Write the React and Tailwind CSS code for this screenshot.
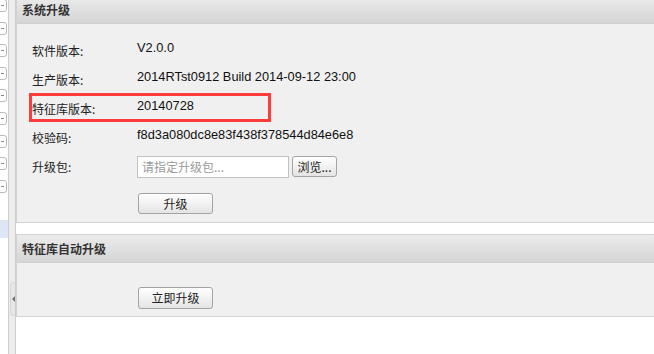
import React from "react";

const ROWS = [
  { label: "软件版本:", value: "V2.0.0" },
  { label: "生产版本:", value: "2014RTst0912 Build 2014-09-12 23:00" },
  { label: "特征库版本:", value: "20140728" },
  { label: "校验码:", value: "f8d3a080dc8e83f438f378544d84e6e8" },
];

const cjk = "font-['Noto_Sans_CJK_SC',sans-serif]";
const latin = "font-['Liberation_Sans','Noto_Sans_CJK_SC',sans-serif]";

function Btn({ children, className = "" }) {
  return (
    <button
      className={`flex items-center justify-center rounded-[3px] border border-[#a3a3a3] bg-gradient-to-b from-white to-[#e4e4e4] text-[12px] leading-none text-[#222] ${cjk} ${className}`}
    >
      {children}
    </button>
  );
}

function Header({ title }) {
  return (
    <div className="flex h-[28px] items-center border-b border-[#cfcfcf] bg-gradient-to-b from-[#ececec] to-[#d5d5d5] pl-[5px]">
      <span className={`text-[12px] font-bold text-[#333] ${cjk}`}>{title}</span>
    </div>
  );
}

export default function App() {
  return (
    <div className="relative flex h-[354px] w-[654px] overflow-hidden bg-white">
      {/* 左侧被截断的树 */}
      <div className="flex w-[8px] shrink-0 flex-col overflow-hidden">
        <div className="flex flex-col gap-[9.6px] pt-0 -mt-[1px]">
          {Array.from({ length: 9 }).map((_, i) => (
            <div
              key={i}
              className="-ml-[10px] flex h-[13px] w-[17px] shrink-0 items-center rounded-[3px] border border-[#b9b9b9] bg-white pl-[10px]"
            >
              <span className="h-[1px] w-[3px] bg-[#888]" />
            </div>
          ))}
        </div>
        <div className="mt-[27px] h-[18px] w-full shrink-0 bg-[#dde6f4]" />
      </div>

      {/* 分隔条 */}
      <div className="flex w-[8px] shrink-0 flex-col border-x border-[#cdcdcd] bg-[#ededed]">
        <div className="mt-[282px] ml-[1px] flex h-[34px] w-[5px] items-center rounded-l-[4px] border border-r-0 border-[#d6d6d6] bg-[#e6e6e6]">
          <span className="ml-[1px] h-0 w-0 border-y-[3px] border-r-[3px] border-y-transparent border-r-[#777]" />
        </div>
      </div>

      {/* 内容区 */}
      <div className="flex min-w-0 flex-1 flex-col">
        <div className="-mt-[5px] w-[700px] border border-[#d2d2d2]">
          <Header title="系统升级" />
          <div className="h-[198px] bg-[#f0f0f0] pl-[15px] pt-[12px]">
            {ROWS.map((r) => (
              <div key={r.label} className="flex h-[29px] items-center">
                <span className={`w-[105px] text-[12px] text-[#222] ${cjk}`}>{r.label}</span>
                <span className={`-mt-[5px] text-[12.8px] text-[#111] ${latin}`}>{r.value}</span>
              </div>
            ))}
            <div className="flex h-[29px] items-center">
              <span className={`w-[105px] text-[12px] text-[#222] ${cjk}`}>升级包:</span>
              <div
                className={`flex h-[22px] w-[152px] items-center border border-[#c2c2c2] bg-white pl-[4px] text-[12px] text-[#9a9a9a] ${cjk}`}
              >
                请指定升级包...
              </div>
              <Btn className="ml-[3px] h-[21px] w-[45px]">浏览...</Btn>
            </div>
            <Btn className="ml-[106px] mt-[12px] h-[21px] w-[75px]">升级</Btn>
          </div>
        </div>

        <div className="mt-[11px] w-[700px] border border-[#d2d2d2]">
          <Header title="特征库自动升级" />
          <div className="h-[53px] bg-[#f0f0f0] pl-[121px] pt-[24px]">
            <Btn className="h-[22px] w-[75px]">立即升级</Btn>
          </div>
        </div>
      </div>

      {/* 标注框 */}
      <div className="pointer-events-none absolute left-[29px] top-[93px] h-[29px] w-[242px] border-[3px] border-[#ff3c3c]" />
    </div>
  );
}
